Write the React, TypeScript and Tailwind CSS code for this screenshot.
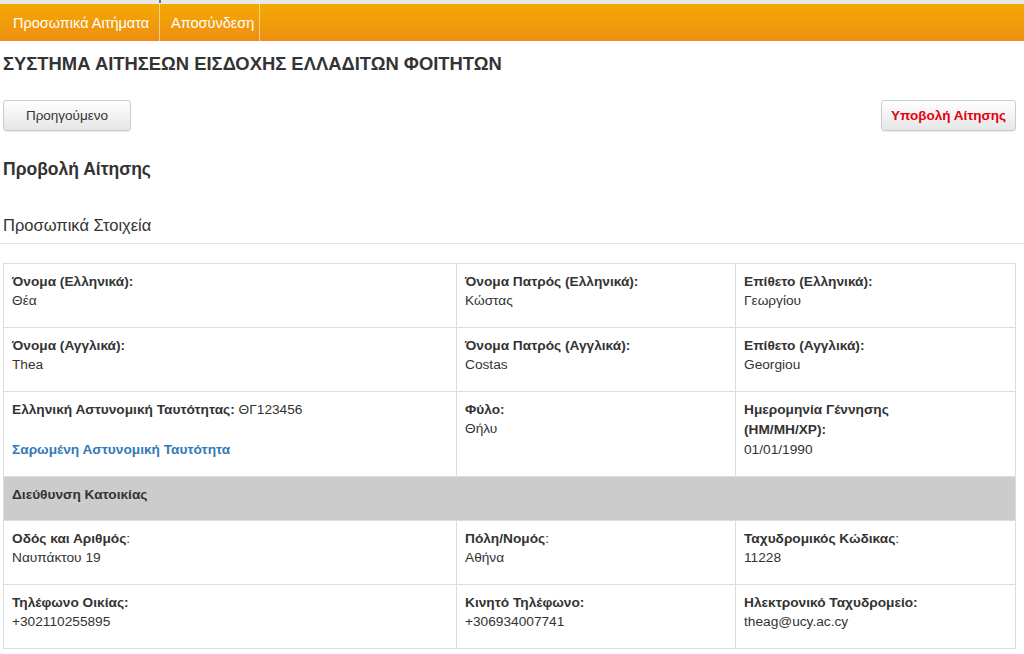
import React from 'react';

type Field = { label: string; value?: string; colonPlain?: boolean };

function Cell({ label, value, colonPlain }: Field) {
  return (
    <td className="border border-[#dddddd] align-top px-2 pt-2 pb-[17px] leading-[19px]">
      <div className="font-bold">
        {label}
        {colonPlain ? <span className="font-normal">:</span> : ':'}
      </div>
      <div>{value}</div>
    </td>
  );
}

export default function App() {
  return (
    <div className="min-h-[654px] bg-white text-[#333333] text-[13.7px] leading-[20px]" style={{ fontFamily: '"Liberation Sans", Arial, sans-serif' }}>
      {/* top strip */}
      <div className="h-[4px] bg-[#e9e9e9] relative">
        <div className="absolute left-[159px] top-0 w-[2px] h-[3px] bg-[#777777]" />
      </div>

      {/* nav */}
      <div className="h-[37px] flex bg-gradient-to-b from-[#f4a900] to-[#ee8e12]">
        <a className="flex items-center w-[160px] pl-[13px] text-white text-[14.5px] border-r border-[#f8d08a]">Προσωπικά Αιτήματα</a>
        <a className="flex items-center w-[100px] pl-[11px] text-white text-[14.5px] border-r border-[#f8d08a]">Αποσύνδεση</a>
      </div>

      <div className="pl-[3px] pr-[8px]">
        <h1 className="text-[18.4px] font-bold mt-[11px] leading-[24px]">ΣΥΣΤΗΜΑ ΑΙΤΗΣΕΩΝ ΕΙΣΔΟΧΗΣ ΕΛΛΑΔΙΤΩΝ ΦΟΙΤΗΤΩΝ</h1>

        <div className="flex justify-between mt-[24px]">
          <button className="w-[128px] h-[31px] rounded-[3px] border border-[#cccccc] bg-gradient-to-b from-white to-[#e6e6e6] text-[13.5px] text-[#333333] shadow-[0_1px_1px_rgba(0,0,0,0.08)]">
            Προηγούμενο
          </button>
          <button className="w-[135px] h-[31px] rounded-[3px] border border-[#cccccc] bg-gradient-to-b from-white to-[#e6e6e6] text-[13.5px] font-bold text-[#e3000f] shadow-[0_1px_1px_rgba(0,0,0,0.08)]">
            Υποβολή Αίτησης
          </button>
        </div>

        <h2 className="text-[17.5px] font-bold mt-[27px] leading-[22px]">Προβολή Αίτησης</h2>

        <h3 className="text-[16.5px] mt-[34px] leading-[22px]">Προσωπικά Στοιχεία</h3>
      </div>
      <div className="h-px bg-[#e5e5e5] mt-[7px]" />

      <div className="pl-[3px] pr-[8px] mt-[19px]">
        <table className="w-full border-collapse border border-[#dddddd]">
          <colgroup>
            <col className="w-[453px]" />
            <col className="w-[279px]" />
            <col />
          </colgroup>
          <tbody>
            <tr>
              <Cell label="Όνομα (Ελληνικά)" value="Θέα" />
              <Cell label="Όνομα Πατρός (Ελληνικά)" value="Κώστας" />
              <Cell label="Επίθετο (Ελληνικά)" value="Γεωργίου" />
            </tr>
            <tr>
              <Cell label="Όνομα (Αγγλικά)" value="Thea" />
              <Cell label="Όνομα Πατρός (Αγγλικά)" value="Costas" />
              <Cell label="Επίθετο (Αγγλικά)" value="Georgiou" />
            </tr>
            <tr>
              <td className="border border-[#dddddd] align-top px-2 pt-2 pb-4">
                <div>
                  <span className="font-bold">Ελληνική Αστυνομική Ταυτότητας:</span> ΘΓ123456
                </div>
                <div className="h-[20px]" />
                <a className="font-bold text-[#337ab7]">Σαρωμένη Αστυνομική Ταυτότητα</a>
              </td>
              <td className="border border-[#dddddd] align-top px-2 pt-2 pb-4 leading-[19px]">
                <div className="font-bold">Φύλο:</div>
                <div>Θήλυ</div>
              </td>
              <td className="border border-[#dddddd] align-top px-2 pt-2 pb-4">
                <div className="font-bold">Ημερομηνία Γέννησης</div>
                <div className="font-bold">(ΗΜ/ΜΗ/ΧΡ):</div>
                <div>01/01/1990</div>
              </td>
            </tr>
            <tr className="bg-[#cccccc]">
              <td colSpan={3} className="border border-[#dddddd] px-2 pt-2 pb-4 leading-[19px] font-bold">
                Διεύθυνση Κατοικίας
              </td>
            </tr>
            <tr>
              <Cell label="Οδός και Αριθμός" value="Ναυπάκτου 19" colonPlain />
              <Cell label="Πόλη/Νομός" value="Αθήνα" colonPlain />
              <Cell label="Ταχυδρομικός Κώδικας" value="11228" colonPlain />
            </tr>
            <tr>
              <Cell label="Τηλέφωνο Οικίας" value="+302110255895" />
              <Cell label="Κινητό Τηλέφωνο" value="+306934007741" />
              <Cell label="Ηλεκτρονικό Ταχυδρομείο" value="theag@ucy.ac.cy" />
            </tr>
          </tbody>
        </table>
      </div>
    </div>
  );
}
